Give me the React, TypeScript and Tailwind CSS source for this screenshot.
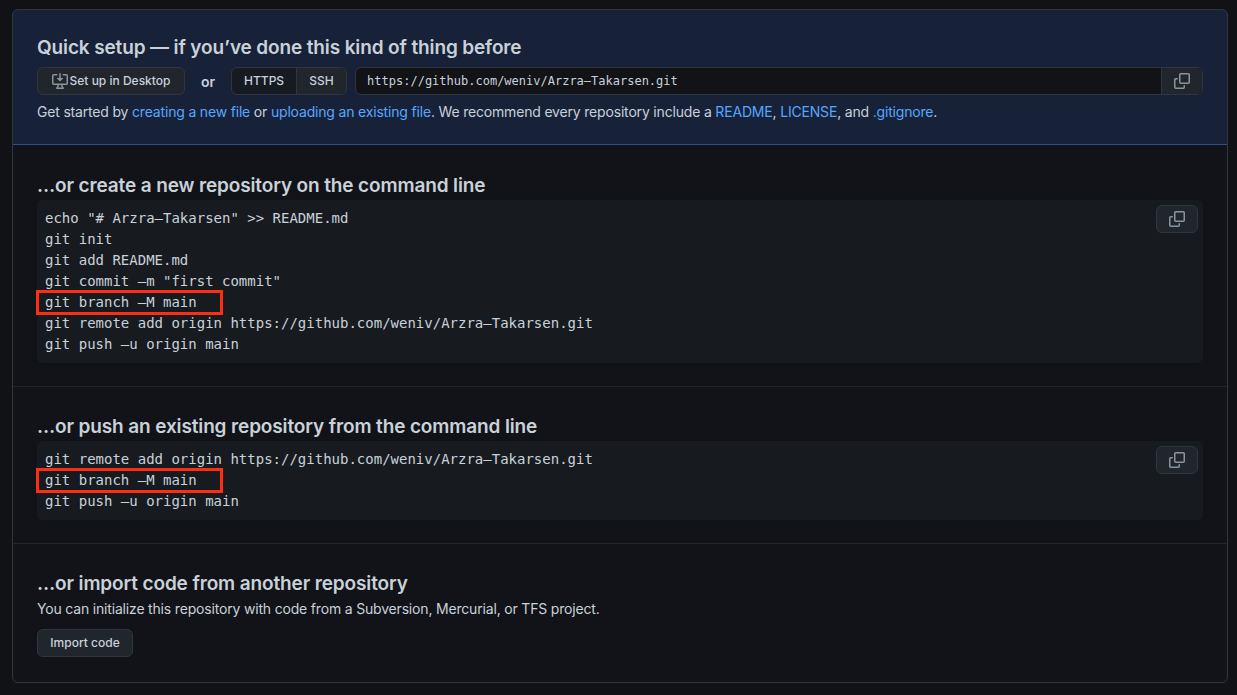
import { ReactNode } from "react";

const sans = "font-['Inter','Liberation_Sans',sans-serif]";
const mono = "font-['DejaVu_Sans_Mono','Liberation_Mono',monospace]";

function CopyIcon({ className }: { className?: string }) {
  return (
    <svg viewBox="0 0 16 16" width="16" height="16" fill="currentColor" className={className}>
      <path d="M0 6.75C0 5.784.784 5 1.75 5h1.5a.75.75 0 0 1 0 1.5h-1.5a.25.25 0 0 0-.25.25v7.5c0 .138.112.25.25.25h7.5a.25.25 0 0 0 .25-.25v-1.5a.75.75 0 0 1 1.5 0v1.5A1.75 1.75 0 0 1 9.25 16h-7.5A1.75 1.75 0 0 1 0 14.25Z" />
      <path d="M5 1.75C5 .784 5.784 0 6.75 0h7.5C15.216 0 16 .784 16 1.75v7.5A1.75 1.75 0 0 1 14.25 11h-7.5A1.75 1.75 0 0 1 5 9.25Zm1.75-.25a.25.25 0 0 0-.25.25v7.5c0 .138.112.25.25.25h7.5a.25.25 0 0 0 .25-.25v-7.5a.25.25 0 0 0-.25-.25Z" />
    </svg>
  );
}

function DesktopDownloadIcon() {
  return (
    <svg viewBox="0 0 16 16" width="16" height="16" fill="currentColor" className="text-[#8b949e]">
      <path d="m4.927 5.427 2.896 2.896a.25.25 0 0 0 .354 0l2.896-2.896A.25.25 0 0 0 10.896 5H8.75V.75a.75.75 0 1 0-1.5 0V5H5.104a.25.25 0 0 0-.177.427Z" />
      <path d="M1.573 2.573a.25.25 0 0 0-.073.177v7.5a.25.25 0 0 0 .25.25h12.5a.25.25 0 0 0 .25-.25v-7.5a.25.25 0 0 0-.25-.25h-3a.75.75 0 1 1 0-1.5h3A1.75 1.75 0 0 1 16 2.75v7.5A1.75 1.75 0 0 1 14.25 12h-3.727c.099 1.041.52 1.872 1.292 2.757A.75.75 0 0 1 11.25 16h-6.5a.75.75 0 0 1-.565-1.243c.772-.885 1.192-1.716 1.292-2.757H1.75A1.75 1.75 0 0 1 0 10.25v-7.5A1.75 1.75 0 0 1 1.75 1h3a.75.75 0 0 1 0 1.5h-3a.25.25 0 0 0-.177.073ZM6.982 12a5.72 5.72 0 0 1-.765 2.5h3.566a5.72 5.72 0 0 1-.765-2.5H6.982Z" />
    </svg>
  );
}

function Link({ children }: { children: ReactNode }) {
  return <a className="text-[#58a6ff]">{children}</a>;
}

function Heading({ children }: { children: ReactNode }) {
  return <h3 className="-mb-[2px] text-[19px] leading-[32px] font-semibold text-[#c9d1d9] tracking-[-0.13px]">{children}</h3>;
}

function CodeBlock({ lines, marked }: { lines: string[]; marked: number }) {
  return (
    <div className="relative rounded-md bg-[#171b20] py-2 px-2">
      <pre className={`${mono} text-[14px] leading-[21px] text-[#c9d1d9] h-fit`}>
        {lines.map((line, i) => (
          <div key={i} className="relative">
            {line}
            {i === marked && (
              <div className="absolute left-[-9px] top-[-2px] w-[187px] h-[25px] border-[3px] border-[#ff2e12]" />
            )}
          </div>
        ))}
      </pre>
      <button className="absolute right-[5px] top-[5px] flex h-[28px] w-[42px] items-center justify-center rounded-md border border-[#30363d] bg-[#21262d]">
        <CopyIcon className="text-[#8b949e]" />
      </button>
    </div>
  );
}

export default function App() {
  return (
    <div className={`${sans} min-h-[695px] bg-[#101216] pl-3 pr-[9px] pt-[9px] pb-3`}>
      <div className="rounded-md border border-[#30363d] bg-[#111318] overflow-hidden h-[674px]">
        {/* Quick setup */}
        <div className="h-[136px] -mx-px -mt-px rounded-t-md border border-[#2f4f8f] bg-[#172238] px-6 pt-[22px]">
          <Heading>Quick setup — if you’ve done this kind of thing before</Heading>
          <div className="mt-[5px] flex items-center">
            <button className="flex h-[28px] w-[148px] items-center justify-center gap-[2px] rounded-md border border-[#30363d] bg-[#21262d] text-[12px] font-medium text-[#c9d1d9]">
              <DesktopDownloadIcon />
              Set up in Desktop
            </button>
            <span className="mx-[16px] text-[14px] font-semibold text-[#c9d1d9]">or</span>
            <div className="flex h-[28px] rounded-md border border-[#30363d] text-[12px] font-medium text-[#c9d1d9]">
              <span className="flex w-[65px] items-center justify-center rounded-l-md bg-[#161b22] border-r border-[#30363d]">HTTPS</span>
              <span className="flex w-[49px] items-center justify-center rounded-r-md bg-[#21262d]">SSH</span>
            </div>
            <div className="ml-[8px] flex h-[28px] flex-1 rounded-md border border-[#30363d] bg-[#111316]">
              <span className={`${mono} flex flex-1 items-center px-[11px] text-[12px] text-[#c9d1d9]`}>
                https://github.com/weniv/Arzra–Takarsen.git
              </span>
              <span className="flex w-[41px] items-center justify-center rounded-r-md border-l border-[#30363d] bg-[#21262d]">
                <CopyIcon className="text-[#8b949e]" />
              </span>
            </div>
          </div>
          <p className="mt-[6px] text-[14px] leading-[21px] tracking-[-0.18px] text-[#c9d1d9]">
            Get started by <Link>creating a new file</Link> or <Link>uploading an existing file</Link>. We recommend every repository include a <Link>README</Link>, <Link>LICENSE</Link>, and <Link>.gitignore</Link>.
          </p>
        </div>

        {/* New repository */}
        <div className="h-[242px] border-b border-[#21262d] px-6 pt-[25px]">
          <Heading>…or create a new repository on the command line</Heading>
          <CodeBlock
            marked={4}
            lines={[
              'echo "# Arzra–Takarsen" >> README.md',
              "git init",
              "git add README.md",
              'git commit –m "first commit"',
              "git branch –M main",
              "git remote add origin https://github.com/weniv/Arzra–Takarsen.git",
              "git push –u origin main",
            ]}
          />
        </div>

        {/* Existing repository */}
        <div className="h-[157px] border-b border-[#21262d] px-6 pt-6">
          <Heading>…or push an existing repository from the command line</Heading>
          <CodeBlock
            marked={1}
            lines={[
              "git remote add origin https://github.com/weniv/Arzra–Takarsen.git",
              "git branch –M main",
              "git push –u origin main",
            ]}
          />
        </div>

        {/* Import */}
        <div className="px-6 pt-6">
          <Heading>…or import code from another repository</Heading>
          <p className="text-[14px] leading-[21px] tracking-[-0.18px] text-[#c9d1d9]">
            You can initialize this repository with code from a Subversion, Mercurial, or TFS project.
          </p>
          <button className="mt-[10px] h-[28px] w-[96px] rounded-md border border-[#30363d] bg-[#21262d] text-[12px] font-medium text-[#c9d1d9]">
            Import code
          </button>
        </div>
      </div>
    </div>
  );
}
